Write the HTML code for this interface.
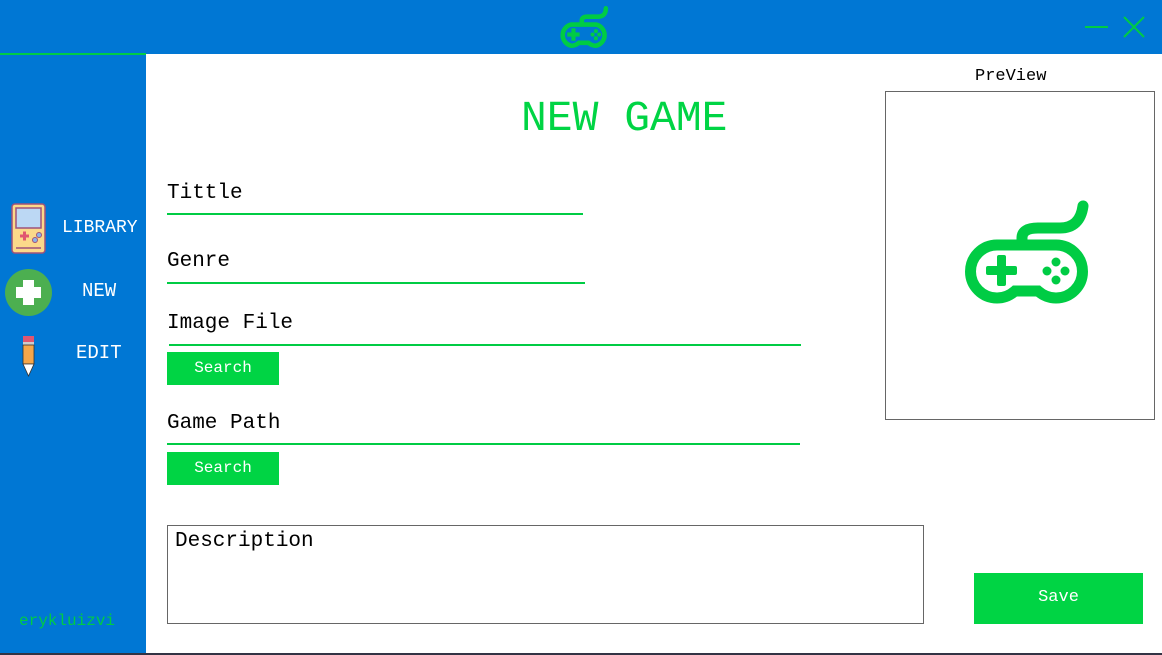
<!DOCTYPE html>
<html><head><meta charset="utf-8"><style>
*{margin:0;padding:0;box-sizing:border-box}
body{width:1162px;height:655px;position:relative;overflow:hidden;background:#fff;font-family:"Liberation Mono",monospace}
.a{position:absolute}
.lbl{position:absolute;font-size:21px;color:#000;line-height:1}
.ln{position:absolute;height:2px;background:#00cc44}
.btn{position:absolute;background:#00d444;color:#fff;font-size:16px;text-align:center;line-height:32px;width:112px;height:33px}
.side{color:#fff;font-size:19px;position:absolute;line-height:1}
</style></head><body>
<div class="a" style="left:0;top:0;width:1162px;height:54px;background:#0077d4"></div>
<div class="a" style="left:0;top:54px;width:146px;height:601px;background:#0077d4"></div>
<div class="a" style="left:0;top:53px;width:146px;height:2px;background:#00cc44"></div>
<svg class="a" style="left:556px;top:4px" width="54" height="44" viewBox="0 0 130 105">
<g fill="none" stroke="#00cc44" stroke-width="11" stroke-linecap="round"><path d="M37 49 H96 A26 26 0 0 1 96 100 Q86 100 78 93 H55 Q47 100 37 100 A26 26 0 0 1 37 49 Z"/><path d="M62 47 V40 Q62 30 75 30 H100 Q120 30 120 10"/></g>
<g fill="#00cc44"><rect x="27" y="68" width="30" height="10"/><rect x="37" y="58" width="10" height="30"/><circle cx="96" cy="65" r="5"/><circle cx="96" cy="82" r="5"/><circle cx="88" cy="73" r="5"/><circle cx="104" cy="73" r="5"/></g></svg>
<div class="a" style="left:1085px;top:26px;width:23px;height:2px;background:#00cc44"></div>
<svg class="a" style="left:1122px;top:15px" width="24" height="24"><path d="M2 2L22 22M22 2L2 22" stroke="#00cc44" stroke-width="2"/></svg>
<!-- sidebar -->
<svg class="a" style="left:11px;top:203px" width="35" height="51" viewBox="0 0 35 51"><rect x="1" y="1" width="33" height="49" rx="3" fill="#fbd98a" stroke="#a0527a" stroke-width="1.5"/><rect x="5" y="5" width="25" height="20" fill="#bcd8f4" stroke="#a0527a" stroke-width="1.5"/><path d="M9 33h9M13.5 28.5v9" stroke="#e05670" stroke-width="3"/><circle cx="24" cy="37" r="2.5" fill="#8ab4e8" stroke="#a0527a"/><circle cx="28" cy="32" r="2.5" fill="#8ab4e8" stroke="#a0527a"/><path d="M5 45h25" stroke="#a0527a" stroke-width="1.5"/></svg>
<div class="side" style="left:62px;top:219px;font-size:18px">LIBRARY</div>
<div class="a" style="left:5px;top:269px;width:47px;height:47px;border-radius:50%;background:#4caf50"></div>
<div class="a" style="left:16px;top:287px;width:25px;height:11px;background:#fff"></div>
<div class="a" style="left:23px;top:280px;width:11px;height:25px;background:#fff"></div>
<div class="side" style="left:82px;top:282px">NEW</div>
<svg class="a" style="left:21px;top:335px" width="15" height="42" viewBox="0 0 15 42"><rect x="2" y="1" width="11" height="6" fill="#e05670"/><rect x="2" y="7" width="11" height="3" fill="#ccc"/><rect x="2" y="10" width="11" height="19" fill="#f4a64a" stroke="#333" stroke-width="0.8"/><path d="M2 29 L7.5 41 L13 29Z" fill="#fff" stroke="#333" stroke-width="0.8"/></svg>
<div class="side" style="left:76px;top:344px">EDIT</div>
<div class="a" style="left:19px;top:612px;color:#00cc44;font-size:16px">erykluizvi</div>
<!-- main -->
<div class="a" style="left:521px;top:97px;color:#00d444;font-size:43px;line-height:1">NEW GAME</div>
<div class="lbl" style="left:167px;top:183px">Tittle</div>
<div class="ln" style="left:167px;top:213px;width:416px"></div>
<div class="lbl" style="left:167px;top:251px">Genre</div>
<div class="ln" style="left:167px;top:282px;width:418px"></div>
<div class="lbl" style="left:167px;top:313px">Image File</div>
<div class="ln" style="left:169px;top:344px;width:632px"></div>
<div class="btn" style="left:167px;top:352px">Search</div>
<div class="lbl" style="left:167px;top:413px">Game Path</div>
<div class="ln" style="left:167px;top:443px;width:633px"></div>
<div class="btn" style="left:167px;top:452px">Search</div>
<div class="a" style="left:167px;top:525px;width:757px;height:99px;border:1px solid #666"></div>
<div class="lbl" style="left:175px;top:531px">Description</div>
<div class="a" style="left:974px;top:573px;width:169px;height:51px;background:#00d444;color:#fff;font-size:17px;text-align:center;line-height:49px">Save</div>
<div class="a" style="left:975px;top:68px;font-size:17px;line-height:1">PreView</div>
<div class="a" style="left:885px;top:91px;width:270px;height:329px;border:1px solid #666"></div>
<svg class="a" style="left:960px;top:198px" width="130" height="110" viewBox="0 0 130 110">
<g fill="none" stroke="#00cc44" stroke-width="11" stroke-linecap="round"><path d="M37 47 H96 A26.5 26.5 0 0 1 96 100 Q86 100 78 93 H55 Q47 100 37 100 A26.5 26.5 0 0 1 37 47 Z"/><path d="M62 45 V40 Q62 30 78 30 H100 Q120 30 123 8"/></g>
<g fill="#00cc44"><rect x="26" y="68" width="31" height="9" rx="2"/><rect x="37" y="57" width="9" height="31" rx="2"/><circle cx="96" cy="64" r="4.5"/><circle cx="96" cy="82" r="4.5"/><circle cx="87" cy="73" r="4.5"/><circle cx="105" cy="73" r="4.5"/></g></svg>
<div class="a" style="left:0;top:653px;width:1162px;height:2px;background:#334"></div>
</body></html>
